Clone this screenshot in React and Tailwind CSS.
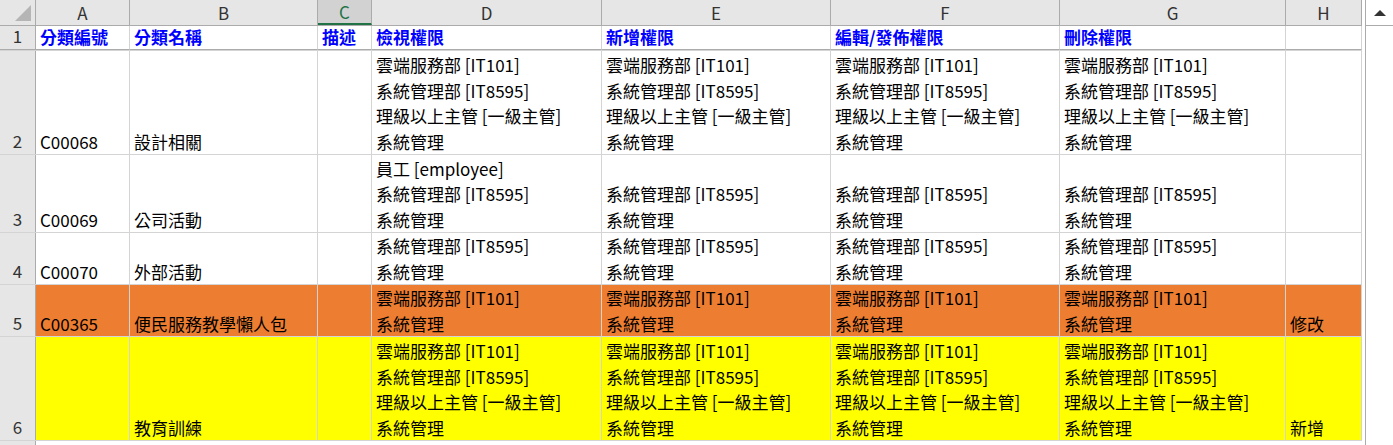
import React from "react";

const cols = [94, 188, 54, 230, 229, 229, 226, 76];
const letters = ["A", "B", "C", "D", "E", "F", "G", "H"];
const L1 = ["雲端服務部 [IT101]", "系統管理部 [IT8595]", "理級以上主管 [一級主管]", "系統管理"];
const rows = [
  { n: 1, h: 25, header: true, cells: ["分類編號", "分類名稱", "描述", "檢視權限", "新增權限", "編輯/發佈權限", "刪除權限", ""] },
  { n: 2, h: 104, cells: ["C00068", "設計相關", "", L1, L1, L1, L1, ""] },
  { n: 3, h: 78, cells: ["C00069", "公司活動", "", ["員工 [employee]", "系統管理部 [IT8595]", "系統管理"], ["系統管理部 [IT8595]", "系統管理"], ["系統管理部 [IT8595]", "系統管理"], ["系統管理部 [IT8595]", "系統管理"], ""] },
  { n: 4, h: 52, cells: ["C00070", "外部活動", "", ["系統管理部 [IT8595]", "系統管理"], ["系統管理部 [IT8595]", "系統管理"], ["系統管理部 [IT8595]", "系統管理"], ["系統管理部 [IT8595]", "系統管理"], ""] },
  { n: 5, h: 52, bg: "bg-[#ed7d31]", cells: ["C00365", "便民服務教學懶人包", "", ["雲端服務部 [IT101]", "系統管理"], ["雲端服務部 [IT101]", "系統管理"], ["雲端服務部 [IT101]", "系統管理"], ["雲端服務部 [IT101]", "系統管理"], "修改"] },
  { n: 6, h: 104, bg: "bg-[#ffff00]", cells: ["", "教育訓練", "", L1, L1, L1, L1, "新增"] },
];

export default function App() {
  return (
    <div className="w-[1393px] h-[445px] overflow-hidden bg-white flex text-[17px] text-black" style={{ fontFamily: '"Noto Sans CJK TC", "Noto Sans", sans-serif' }}>
      <div className="w-[1362px] flex flex-col">
        <div className="flex h-[26px] bg-[#e6e6e6] border-b border-[#ababab] shrink-0">
          <div className="w-[36px] border-r border-[#ababab] relative">
            <div className="absolute right-[4px] bottom-[4px] w-0 h-0 border-l-[16px] border-l-transparent border-b-[16px] border-b-[#b5b5b5]"></div>
          </div>
          {cols.map((w, i) => (
            <div key={i} style={{ width: w }} className={`shrink-0 flex items-center justify-center border-r border-[#ababab] leading-[24px] ${i === 2 ? "bg-[#d2d2d2] text-[#217346] border-b-2 border-b-[#217346]" : "text-[#333]"}`} >{letters[i]}</div>
          ))}
        </div>
        {rows.map((r) => (
          <div key={r.n} className="flex shrink-0 border-b border-[#d4d4d4]" style={{ height: r.h }}>
            <div className={`w-[36px] shrink-0 bg-[#e6e6e6] border-r border-[#ababab] flex items-end justify-center leading-[26px] text-[#333] ${r.n === 1 ? "border-b border-b-[#ababab]" : ""}`}>{r.n}</div>
            {r.cells.map((c, i) => (
              <div key={i} style={{ width: cols[i] }} className={`shrink-0 overflow-visible whitespace-nowrap flex flex-col justify-end px-[4px] border-r border-[#d4d4d4] leading-[25.5px] ${r.bg || ""} ${r.header ? "font-bold text-[#0000ff] border-b border-b-[#ababab]" : ""}`}>
                {Array.isArray(c) ? c.map((t, j) => <div key={j}>{t}</div>) : <div>{c}</div>}
              </div>
            ))}
          </div>
        ))}
        <div className="flex flex-1">
          <div className="w-[36px] bg-[#e6e6e6] border-r border-[#ababab]"></div>
        </div>
      </div>
      <div className="w-[3px] bg-white"></div>
      <div className="w-[28px] bg-[#f0f0f0] border-l border-[#ababab] flex flex-col">
        <div className="h-[26px] bg-white border-b border-[#ababab] flex items-center justify-center">
          <div className="w-0 h-0 border-l-[6px] border-r-[6px] border-b-[6px] border-l-transparent border-r-transparent border-b-[#333]"></div>
        </div>
        <div className="flex-1 bg-white"></div>
      </div>
    </div>
  );
}
